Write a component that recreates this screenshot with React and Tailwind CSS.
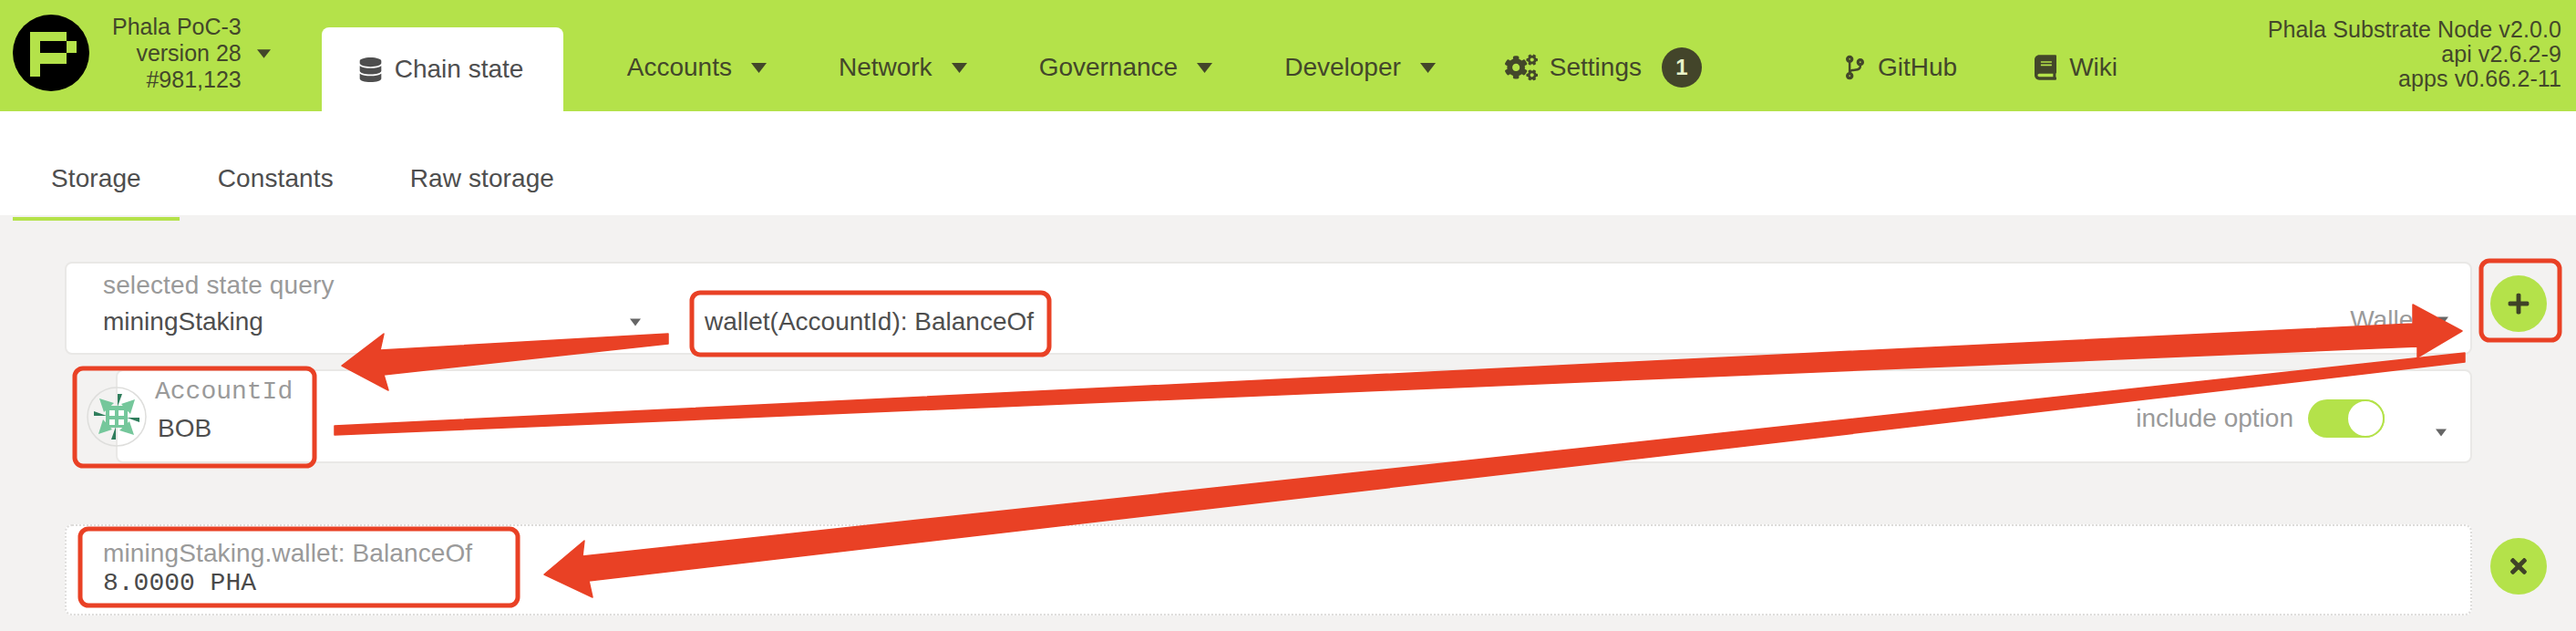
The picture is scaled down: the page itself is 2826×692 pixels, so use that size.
import React from "react";
import { FaBook, FaCodeBranch, FaCogs, FaDatabase, FaPlus, FaTimes } from "react-icons/fa";

const navItems = ["Accounts", "Network", "Governance", "Developer"];
const subTabs = ["Storage", "Constants", "Raw storage"];

const Caret = ({ className }) => (
  <svg className={className} viewBox="0 0 17 11" fill="currentColor">
    <polygon points="0,0 17,0 8.5,11" />
  </svg>
);

const PhalaLogo = () => (
  <svg className="w-[84px] h-[84px] shrink-0" viewBox="0 0 84 84">
    <circle cx="42" cy="42" r="42" fill="#000000" />
    <g fill="#b4e24a">
      <rect x="19" y="19" width="40" height="10" />
      <rect x="19" y="19" width="11" height="35" />
      <rect x="59" y="29" width="11" height="13" />
      <rect x="19" y="42" width="40" height="12" />
      <rect x="19" y="54" width="11" height="14" />
    </g>
  </svg>
);

const Identicon = () => (
  <svg className="w-[66px] h-[66px] shrink-0 relative z-10 -mr-[34px]" viewBox="0 0 66 66">
    <circle cx="33" cy="33" r="32" fill="none" stroke="#dededc" strokeWidth="1.5" />
    {[0, 90, 180, 270].map((deg) => (
      <g key={deg} transform={`rotate(${deg} 33 33)`}>
        <polygon points="14,13 30,18 19,28" fill="#75c79b" />
        <polygon points="34,8 39,8 34,22" fill="#2f7d5c" />
      </g>
    ))}
    <rect x="21" y="21" width="24" height="24" fill="#75c79b" />
    <g fill="#ffffff">
      <rect x="25" y="26" width="6" height="6" />
      <rect x="35" y="26" width="6" height="6" />
      <rect x="25" y="36" width="6" height="6" />
      <rect x="35" y="36" width="6" height="6" />
    </g>
  </svg>
);

const RoundButton = ({ children }) => (
  <button className="ml-[20px] mt-[15px] w-[62px] h-[62px] shrink-0 rounded-full bg-[#b4e24a] text-[#3f4227] text-[26px] flex items-center justify-center">
    {children}
  </button>
);

// red arrows and boxes drawn on top of the screenshot
const Annotations = () => (
  <svg className="absolute top-0 left-0 w-[2826px] h-[692px] pointer-events-none" viewBox="0 0 2826 692">
    <g fill="none" stroke="#e94125" strokeWidth="5">
      <rect x="759" y="321" width="392" height="68" rx="9" />
      <rect x="82" y="404" width="263" height="107" rx="9" />
      <rect x="88" y="580" width="480" height="84" rx="9" />
      <rect x="2722" y="286" width="86" height="87" rx="9" />
    </g>
    <g fill="#e94125" stroke="#e94125" strokeWidth="1.5" strokeLinejoin="round">
      <polygon points="733,366 733,377 421,411 426,428 375,401 421,366 417,384" />
      <polygon points="367,467 367,477 2652,380 2652,392 2701,363 2647,334 2647,355" />
      <polygon points="2704,387 2704,397 646,637 650,655 597,630 641,593 639,610" />
    </g>
  </svg>
);

const App = () => {
  return (
    <div className="relative w-[2826px] h-[692px] overflow-hidden bg-[#f3f2f1] font-['Liberation_Sans',Arial,sans-serif] text-[28px] text-[#4e4e4e]">
      <header className="flex h-[122px] bg-[#b4e24a] text-[#43472a]">
        <div className="ml-[14px] mt-[16px]">
          <PhalaLogo />
        </div>
        <div className="ml-[25px] mt-[15px] flex items-center self-start">
          <div className="text-right text-[25px] leading-[29px]">
            <div>Phala PoC-3</div>
            <div>version 28</div>
            <div>#981,123</div>
          </div>
          <Caret className="w-[15px] h-[10px] ml-[17px]" />
        </div>
        <div className="ml-[56px] mt-[30px] w-[265px] h-[92px] bg-white rounded-t-lg flex items-center pl-[40px] gap-[13px] text-[#4e4e4e]">
          <FaDatabase className="w-[27px] h-[27px]" />
          <span>Chain state</span>
        </div>
        <nav className="ml-[70px] mt-[36px] h-[76px] flex items-center gap-[79px]">
          {navItems.map((item) => (
            <div key={item} className="flex items-center gap-[21px]">
              <span>{item}</span>
              <Caret className="w-[17px] h-[11px]" />
            </div>
          ))}
        </nav>
        <div className="ml-[76px] mt-[36px] h-[76px] flex items-center">
          <FaCogs className="w-[36px] h-[30px]" />
          <span className="ml-[13px]">Settings</span>
          <span className="ml-[22px] w-[44px] h-[44px] rounded-full bg-[#43452a] text-[#e8f2c8] text-[24px] font-bold flex items-center justify-center">
            1
          </span>
        </div>
        <div className="ml-[158px] mt-[36px] h-[76px] flex items-center">
          <FaCodeBranch className="w-[20px] h-[28px]" />
          <span className="ml-[15px]">GitHub</span>
        </div>
        <div className="ml-[85px] mt-[36px] h-[76px] flex items-center">
          <FaBook className="w-[24px] h-[28px]" />
          <span className="ml-[14px]">Wiki</span>
        </div>
        <div className="ml-auto mr-[16px] pt-[19px] text-right text-[25px] leading-[27px] tracking-[0.1px]">
          <div>Phala Substrate Node v2.0.0</div>
          <div>api v2.6.2-9</div>
          <div>apps v0.66.2-11</div>
        </div>
      </header>

      <div className="flex h-[114px] bg-white pl-[14px] pt-[58px]">
        {subTabs.map((tab, index) => (
          <div key={tab} className="relative px-[42px] h-[32px] leading-[32px] tracking-[0.1px]">
            {tab}
            {index === 0 && (
              <div className="absolute left-0 right-0 top-[58px] h-[4px] bg-[#b4e24a]" />
            )}
          </div>
        ))}
      </div>

      <main className="pt-[51px] pl-[71px] pr-[32px]">
        <div className="flex items-start">
          <div className="flex-1 h-[102px] flex bg-white border-2 border-[#e9e8e6] rounded-lg pl-[40px] pr-[24px] pt-[8px]">
            <div className="w-[590px]">
              <div className="leading-[32px] text-[#9a9a9a] tracking-[0.15px]">selected state query</div>
              <div className="mt-[8px] flex items-center justify-between leading-[32px]">
                <span>miningStaking</span>
                <Caret className="w-[12px] h-[9px] text-[#666666]" />
              </div>
            </div>
            <div className="ml-[70px] mt-[40px] leading-[32px]">wallet(AccountId): BalanceOf</div>
            <div className="ml-auto mt-[38px] h-[32px] flex items-center gap-[19px] text-[#9a9a9a]">
              <span>Wallet</span>
              <Caret className="w-[12px] h-[9px] text-[#666666]" />
            </div>
          </div>
          <RoundButton>
            <FaPlus />
          </RoundButton>
        </div>

        <div className="mt-[16px] mr-[82px] flex items-center pl-[24px]">
          <Identicon />
          <div className="flex-1 h-[103px] flex bg-white border-2 border-[#e9e8e6] rounded-lg pl-[41px] pr-[26px] pt-[7px]">
            <div>
              <div className="font-['Liberation_Mono',monospace] leading-[32px] text-[#9a9a9a]">AccountId</div>
              <div className="mt-[8px] ml-[3px] leading-[32px]">BOB</div>
            </div>
            <div className="ml-auto mt-[5px] h-[80px] flex items-center text-[#9a9a9a]">
              <span>include option</span>
              <div className="ml-[16px] w-[84px] h-[42px] rounded-full bg-[#b4e24a] flex justify-end">
                <div className="w-[42px] h-[42px] rounded-full bg-white border-2 border-[#b4e24a]" />
              </div>
              <Caret className="ml-[56px] mt-[30px] w-[12px] h-[9px] text-[#666666]" />
            </div>
          </div>
        </div>

        <div className="mt-[67px] flex items-start">
          <div className="flex-1 h-[100px] bg-white border-2 border-dotted border-[#dddcda] rounded-lg pl-[40px] pt-[14px]">
            <div className="leading-[32px] text-[#9a9a9a] tracking-[0.12px]">miningStaking.wallet: BalanceOf</div>
            <div className="mt-[1px] font-['Liberation_Mono',monospace] leading-[32px] text-[#4a4a4a]">8.0000 PHA</div>
          </div>
          <RoundButton>
            <FaTimes />
          </RoundButton>
        </div>
      </main>

      <Annotations />
    </div>
  );
};

export default App;
